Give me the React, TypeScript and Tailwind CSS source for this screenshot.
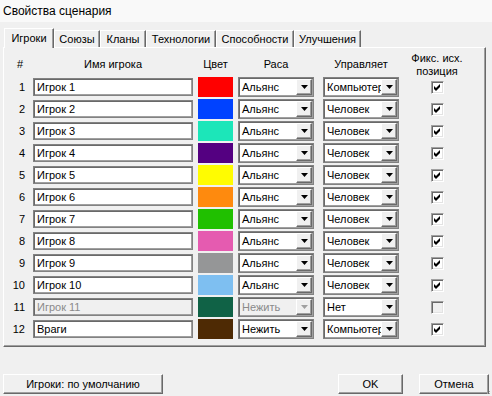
import type { ReactNode } from "react";

type Player = {
  name: string;
  color: string;
  race: string;
  ctrl: string;
  fixed: boolean;
  disabled?: boolean;
};

const players: Player[] = [
  { name: "Игрок 1", color: "#ff0000", race: "Альянс", ctrl: "Компьютер", fixed: true },
  { name: "Игрок 2", color: "#0042ff", race: "Альянс", ctrl: "Человек", fixed: true },
  { name: "Игрок 3", color: "#1ce6b9", race: "Альянс", ctrl: "Человек", fixed: true },
  { name: "Игрок 4", color: "#540081", race: "Альянс", ctrl: "Человек", fixed: true },
  { name: "Игрок 5", color: "#fffc01", race: "Альянс", ctrl: "Человек", fixed: true },
  { name: "Игрок 6", color: "#fe8a0e", race: "Альянс", ctrl: "Человек", fixed: true },
  { name: "Игрок 7", color: "#20c000", race: "Альянс", ctrl: "Человек", fixed: true },
  { name: "Игрок 8", color: "#e55bb0", race: "Альянс", ctrl: "Человек", fixed: true },
  { name: "Игрок 9", color: "#959697", race: "Альянс", ctrl: "Человек", fixed: true },
  { name: "Игрок 10", color: "#7ebff1", race: "Альянс", ctrl: "Человек", fixed: true },
  { name: "Игрок 11", color: "#106246", race: "Нежить", ctrl: "Нет", fixed: false, disabled: true },
  { name: "Враги", color: "#4e2a04", race: "Нежить", ctrl: "Компьютер", fixed: true },
];

const tabs = [
  { label: "Игроки", w: "w-[50px]" },
  { label: "Союзы", w: "w-[46px]" },
  { label: "Кланы", w: "w-[46px]" },
  { label: "Технологии", w: "w-[70px]" },
  { label: "Способности", w: "w-[78px]" },
  { label: "Улучшения", w: "w-[67px]" },
];

const Combo = ({ value, disabled }: { value: string; disabled?: boolean }): ReactNode => (
  <div
    className={`flex h-[20px] w-[76px] border border-[#828282] shadow-[inset_1px_1px_0_#696969,inset_-1px_-1px_0_#a0a0a0] p-[1px] ${
      disabled ? "bg-[#f0f0f0] text-[#8a8a8a]" : "bg-white"
    }`}
  >
    <span className="flex-1 overflow-hidden whitespace-nowrap pl-[2px] leading-[16px]">{value}</span>
    <span className="flex h-[16px] w-[16px] shrink-0 items-center justify-center border border-t-white border-l-white border-r-[#696969] border-b-[#696969] bg-[#f0f0f0] shadow-[inset_-1px_-1px_0_#a0a0a0]">
      <svg width="7" height="4" viewBox="0 0 7 4">
        <path d="M0 0h7L3.5 4z" fill={disabled ? "#a0a0a0" : "#000"} />
      </svg>
    </span>
  </div>
);

const Check = ({ checked, disabled }: { checked: boolean; disabled?: boolean }): ReactNode => (
  <div
    className={`flex h-[13px] w-[13px] items-center justify-center border border-t-[#a0a0a0] border-l-[#a0a0a0] border-b-white border-r-white shadow-[inset_1px_1px_0_#696969,inset_-1px_-1px_0_#e3e3e3] ${
      disabled ? "bg-[#f0f0f0]" : "bg-white"
    }`}
  >
    {checked && (
      <svg width="7" height="7" viewBox="0 0 7 7">
        <path d="M0 2L2 4L6 0V3L2 7L0 5z" fill="#000" />
      </svg>
    )}
  </div>
);

const Button = ({ label, w }: { label: string; w: string }): ReactNode => (
  <div
    className={`flex h-[20px] ${w} items-center justify-center border border-t-white border-l-white border-r-[#696969] border-b-[#696969] bg-[#f0f0f0] shadow-[inset_-1px_-1px_0_#a0a0a0]`}
  >
    {label}
  </div>
);

export default function App(): ReactNode {
  return (
    <div className="relative flex h-[396px] w-[492px] flex-col overflow-hidden bg-[#f0f0f0] font-['Liberation_Sans',Arial,sans-serif] text-[11px] text-black">
      <div className="flex h-[22px] items-center bg-[#f9f9f9] pl-[3px] text-[12px]">
        Свойства сценария
      </div>

      <div className="w-[486px] pl-[3px] pt-[6px]">
        <div className="flex h-[19px] items-end pl-[1px]">
          {tabs.map((t, i) =>
            i === 0 ? (
              <div
                key={t.label}
                className={`relative z-10 -mb-px flex h-[20px] ${t.w} items-center justify-center border border-b-0 border-t-white border-l-white border-r-[#696969] bg-[#f0f0f0] shadow-[inset_-1px_0_0_#a0a0a0]`}
              >
                {t.label}
              </div>
            ) : (
              <div
                key={t.label}
                className={`flex h-[17px] ${t.w} items-center justify-center border border-b-0 border-t-white border-l-white border-r-[#696969] shadow-[inset_-1px_0_0_#a0a0a0]`}
              >
                {t.label}
              </div>
            ),
          )}
        </div>

        <div className="flex h-[300px] w-[483px] flex-col border border-t-white border-l-white border-r-[#696969] border-b-[#696969] shadow-[inset_-1px_-1px_0_#a0a0a0]">
          <div className="flex h-[28px] items-center pt-[5px] text-center">
            <div className="w-[24px] pl-[8px]">#</div>
            <div className="ml-[5px] w-[160px]">Имя игрока</div>
            <div className="ml-[5px] w-[35px]">Цвет</div>
            <div className="ml-[5px] w-[76px]">Раса</div>
            <div className="ml-[9px] w-[76px]">Управляет</div>
            <div className="ml-[9px] w-[58px] leading-[13px]">
              Фикс. исх.
              <br />
              позиция
            </div>
          </div>

          {players.map((p, i) => (
            <div key={p.name} className="flex h-[22px] items-center">
              <div className="w-[24px] pr-[3px] text-right">{i + 1}</div>
              <div
                className={`ml-[5px] flex h-[18px] w-[160px] items-center border border-[#828282] pl-[3px] shadow-[inset_1px_1px_0_#696969,inset_-1px_-1px_0_#a0a0a0] ${
                  p.disabled ? "bg-[#f0f0f0] text-[#8a8a8a]" : "bg-white"
                }`}
              >
                {p.name}
              </div>
              <div className="ml-[5px] h-[20px] w-[35px]" style={{ backgroundColor: p.color }} />
              <div className="ml-[5px]">
                <Combo value={p.race} disabled={p.disabled} />
              </div>
              <div className="ml-[9px]">
                <Combo value={p.ctrl} />
              </div>
              <div className="ml-[9px] flex w-[58px] justify-center">
                <Check checked={p.fixed} disabled={p.disabled} />
              </div>
            </div>
          ))}
        </div>
      </div>

      <div className="mt-[27px] flex pl-[3px] pr-[3px]">
        <Button label="Игроки: по умолчанию" w="w-[160px]" />
        <div className="ml-auto">
          <Button label="OK" w="w-[65px]" />
        </div>
        <div className="ml-[16px]">
          <Button label="Отмена" w="w-[70px]" />
        </div>
      </div>

      <svg className="absolute bottom-[1px] right-[1px]" width="4" height="4" viewBox="0 0 4 4">
        <rect x="2" y="0" width="1" height="1" fill="#a0a0a0" />
        <rect x="0" y="2" width="1" height="1" fill="#a0a0a0" />
        <rect x="2" y="2" width="1" height="1" fill="#a0a0a0" />
      </svg>
    </div>
  );
}
